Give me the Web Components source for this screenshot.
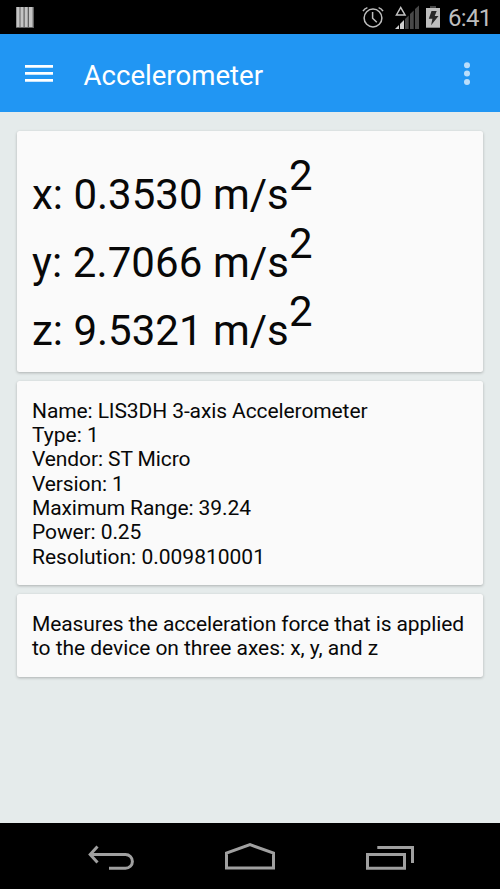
<!DOCTYPE html>
<html lang="en"><head><meta charset="utf-8"><title>Accelerometer</title>
<style>html,body{margin:0;height:100%;overflow:hidden}body{background:#e5ebeb;font-family:Roboto,sans-serif}</style></head>
<body>
<phone-screen>
<status-bar slot="top"></status-bar>
<app-bar slot="top">Accelerometer</app-bar>
<info-card style="height:241.6px"><axis-reading axis="x" value="0.3530"></axis-reading><axis-reading axis="y" value="2.7066" style="letter-spacing:.1px"></axis-reading><axis-reading axis="z" value="9.5321"></axis-reading></info-card>
<info-card style="height:204.6px">
<text-line>Name: LIS3DH 3-axis Accelerometer</text-line><text-line style="letter-spacing:0">Type: 1</text-line><text-line>Vendor: ST Micro</text-line><text-line>Version: 1</text-line><text-line>Maximum Range: 39.24</text-line><text-line>Power: 0.25</text-line><text-line style="letter-spacing:0">Resolution: 0.009810001</text-line></info-card>
<info-card style="height:83px"><text-line>Measures the acceleration force that is applied</text-line><text-line style="letter-spacing:-.05px">to the device on three axes: x, y, and z</text-line></info-card>
<nav-bar slot="bottom"></nav-bar>
</phone-screen>
<script>
const define=(name,html,setup)=>customElements.define(name,class extends HTMLElement{
 constructor(){super();this.attachShadow({mode:'open'}).innerHTML=html}
 connectedCallback(){if(setup)setup(this,this.shadowRoot)}
});
define('phone-screen',`<style>:host{display:flex;flex-direction:column;height:889px;width:500px}main{flex:1;display:flex;flex-direction:column;gap:8.4px;padding:18.4px 17px 0;box-sizing:border-box}</style><slot name="top"></slot><main><slot></slot></main><slot name="bottom"></slot>`);
define('status-bar',`<style>:host{display:flex;align-items:center;height:34px;background:#000;color:#bebebe;box-sizing:border-box}svg{display:block;flex:none}.time{font-size:24px;line-height:34px;margin-left:8px;letter-spacing:-.7px;padding-top:2px}</style>
<svg width="440" height="34" viewBox="0 0 440 34">
<path fill="#606060" d="M16 7h18v21H16z"/><path fill="#c4c4c4" d="M16.5 7h3v20h-3zM20.5 7h3v20h-3zM24.7 7h3v20h-3zM29 7h3.6v20H29z"/>
<g fill="none" stroke="#bebebe" stroke-width="1.5"><circle cx="373" cy="18" r="8.9"/><path d="M372.6 12v6.3l4.2 4M363 11.2q1.5-2.6 4.4-3.6M383 11.2q-1.5-2.6-4.4-3.6"/></g>
<path fill="#484848" d="M405 19l3.7-3.6V29H405zM410 14l3.7-3.6V29H410zM415 9l4-3.5V29h-4z"/><path fill="#d0d0d0" d="M395 29l4-4v4zM400 24l4-4v9h-4z"/><path fill="none" stroke="#c4c4c4" stroke-width="1.5" d="M396.4 15l4.3-7.5L405 15z"/>
<path fill="#484848" d="M430 6h6v3h-6z"/><path fill="#bebebe" d="M426 8h14.6v19.7H426z"/><path fill="#292929" d="M431.5 11h5.2l-2 5h3.8l-7.4 9.2 1.3-6.5h-3.6z"/>
</svg><span class="time">6:41</span>`);
define('app-bar',`<style>:host{display:flex;align-items:center;height:78.2px;background:#2196f3;color:#fff;box-sizing:border-box;padding:0 27.5px 0 25px;font-size:27.6px}svg{flex:none}.t{flex:1;margin-left:30.5px;padding-top:4px}</style><svg width="28" height="18"><path fill="#fff" d="M0 1h28v2.8H0zM0 8h28v2.8H0zM0 15h28v2.8H0z"/></svg><span class="t"><slot></slot></span><svg width="12" height="26"><g fill="#bbdefb"><circle cx="6" cy="5.3" r="3"/><circle cx="6" cy="13.6" r="3"/><circle cx="6" cy="21.9" r="3"/></g></svg>`);
define('info-card',`<style>:host{display:block;box-sizing:border-box;background:#fafafa;border-radius:2.5px;padding:18px 15px 0;box-shadow:0 1px 3px rgba(0,0,0,.25);color:#080808}</style><slot></slot>`);
define('axis-reading',`<style>:host{display:flex;height:68px;font-size:42px;line-height:92px;white-space:pre}.m{width:257px}.e{transform:translateY(-19px)}</style><span class="m"></span><span class="e">2</span>`,(h,r)=>{r.querySelector('.m').textContent=h.getAttribute('axis')+': '+h.getAttribute('value')+' m/s'});
define('text-line',`<style>:host{display:block;height:24.33px;line-height:24.33px;font-size:21px;letter-spacing:-.1px;white-space:nowrap}</style><slot></slot>`);
define('nav-bar',`<style>:host{display:block;height:66.5px;background:#000}svg{display:block}</style><svg width="500" height="66" viewBox="0 823 500 66"><g fill="none" stroke="#a0a0a0" stroke-width="3"><path d="M90 854.5h35.5a6.9 6.9 0 0 1 0 13.8H109M97.5 846.5l-7.3 8 7.3 8M226.5 868V853l23.5-8.3L273.5 853v15zM367.5 854.5h37v13.7h-37zM377.3 847.5h35.2V863"/></g></svg>`);
</script></body></html>
